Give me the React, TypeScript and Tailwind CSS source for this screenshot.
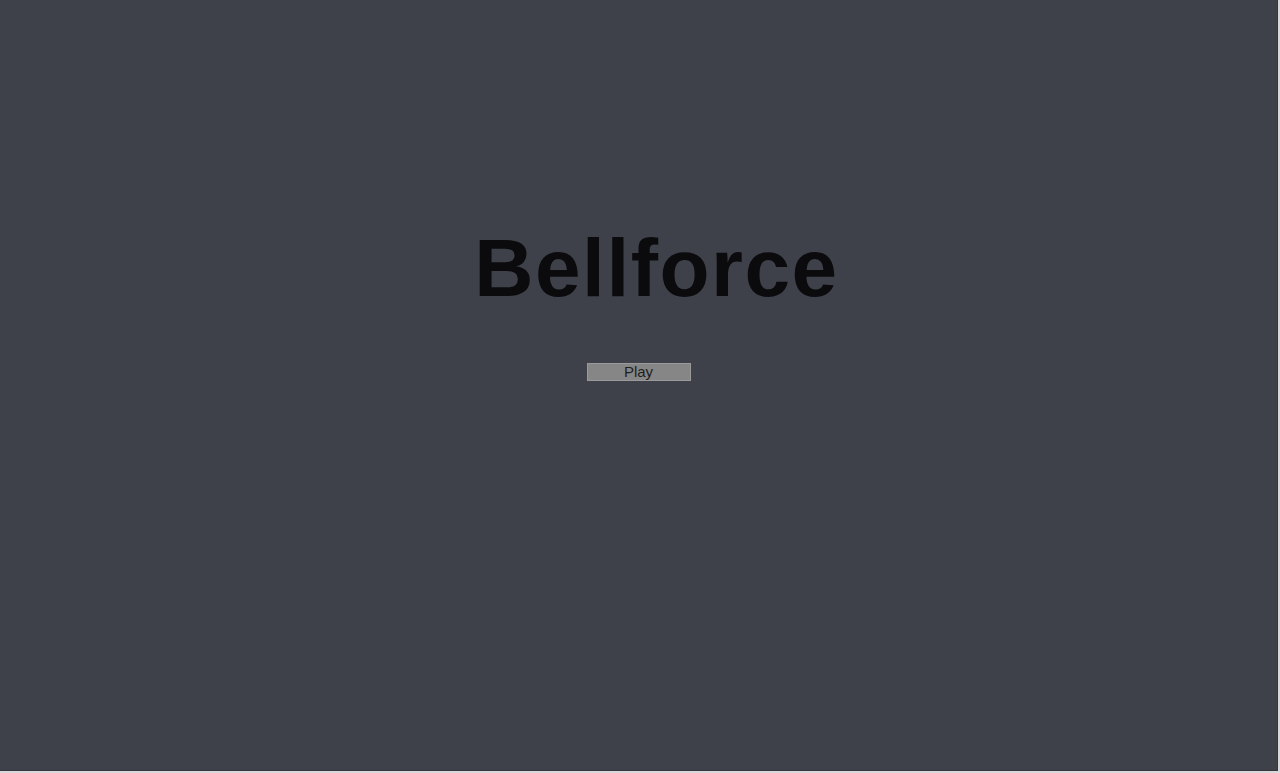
import React from "react";

export default function App() {
  return (
    <div className="w-[1280px] h-[773px] bg-[#d8d8da] overflow-hidden" style={{ fontFamily: '"Liberation Sans", Arial, sans-serif' }}>
      <div className="w-[1278px] h-[771px] bg-[#3f414a] border-r border-b border-[#35373e] flex flex-col items-center">
        <h1 className="mt-[222px] ml-[36px] text-[82px] leading-[92px] font-bold text-[#0b0b0d] tracking-[1.5px]">Bellforce</h1>
        <button className="mt-[49px] w-[104px] h-[18px] bg-[#868686] border border-[#9a9a9a] text-[15px] leading-[16px] text-[#1e1e1e] flex items-center justify-center">
          Play
        </button>
      </div>
    </div>
  );
}
